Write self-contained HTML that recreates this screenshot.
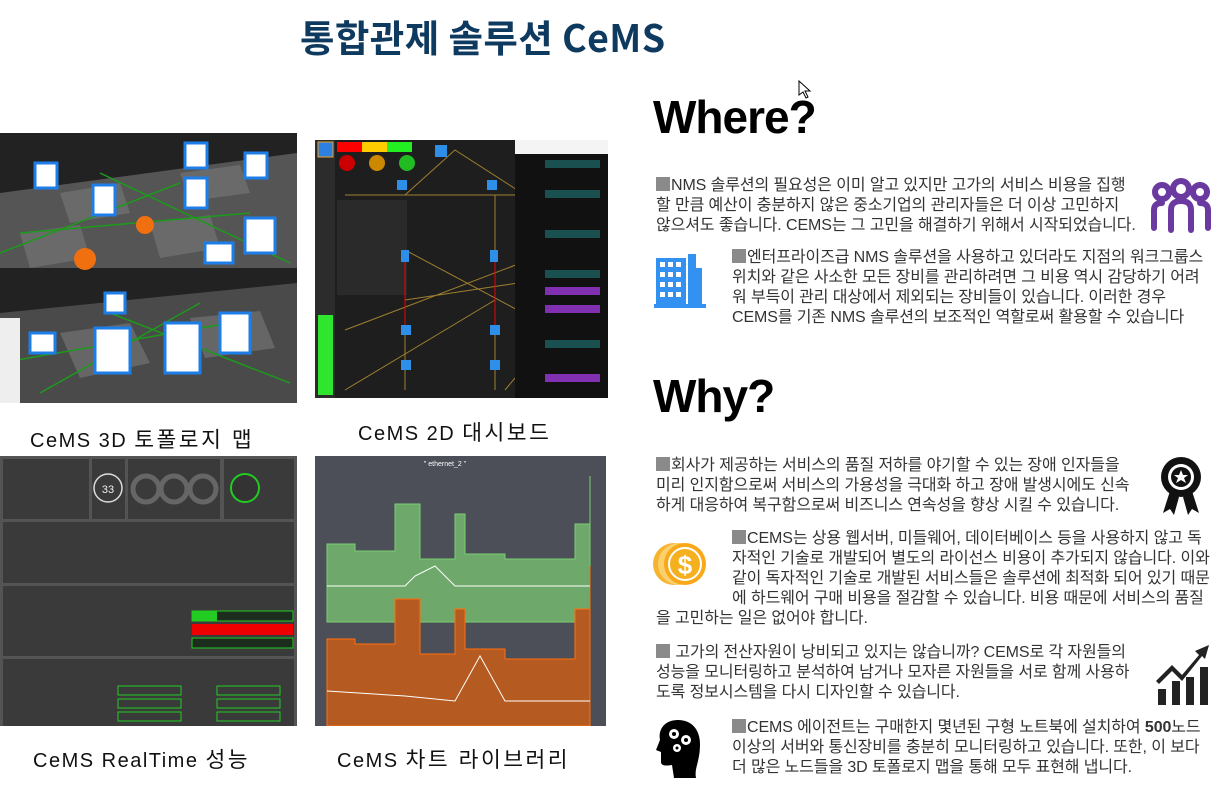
<!DOCTYPE html>
<html><head><meta charset="utf-8"><style>
*{margin:0;padding:0;box-sizing:border-box}
body{width:1228px;height:792px;background:#fff;position:relative;overflow:hidden;font-family:"Liberation Sans","Noto Sans CJK KR",sans-serif}
.a{position:absolute}
.title{left:300px;top:8px;font-size:37.5px;font-weight:bold;color:#0f3a5f;font-family:"Noto Sans CJK KR",sans-serif;letter-spacing:0.4px;white-space:nowrap}
.big{font-size:46px;font-weight:bold;color:#000;letter-spacing:-1px}
.cap{font-size:20px;color:#111;white-space:nowrap;letter-spacing:1.5px;font-family:"Liberation Sans","Noto Sans CJK KR",sans-serif}
.cap .k{font-size:21.5px;letter-spacing:2.5px}
.p{font-size:16px;line-height:20px;color:#333;white-space:nowrap;letter-spacing:-0.1px}
.sq{display:inline-block;width:14px;height:14px;background:#8a8a8a;vertical-align:-1px;margin-right:1px}
</style></head><body>
<div class="a title">통합관제 솔루션 CeMS</div>

<!-- 3D topology -->
<svg class="a" style="left:0;top:133px" width="297" height="270" viewBox="0 0 297 270">
<rect width="297" height="270" fill="#3a3a3a"/>
<polygon points="0,40 297,0 297,135 0,135" fill="#555"/>
<polygon points="0,0 297,0 297,20 0,60" fill="#222"/>
<g fill="#6a6a6a"><polygon points="60,60 120,50 130,80 70,90"/><polygon points="180,40 240,32 250,60 190,68"/><polygon points="20,100 80,92 90,125 30,135"/><polygon points="150,90 210,82 220,115 160,125"/></g>
<rect x="0" y="135" width="297" height="135" fill="#4a4a4a"/>
<polygon points="0,135 297,135 297,150 0,180" fill="#222"/>
<g fill="#666"><polygon points="60,200 130,190 150,230 80,245"/><polygon points="190,185 260,178 275,215 205,225"/></g>
<g stroke="#1c9a1c" stroke-width="1.5">
<line x1="0" y1="120" x2="180" y2="50"/><line x1="100" y1="40" x2="290" y2="130"/><line x1="20" y1="100" x2="250" y2="80"/>
<line x1="40" y1="260" x2="200" y2="170"/><line x1="110" y1="180" x2="290" y2="250"/><line x1="0" y1="230" x2="230" y2="190"/>
</g>
<g fill="#fff" stroke="#1e7ee8" stroke-width="3">
<rect x="35" y="30" width="22" height="25"/><rect x="93" y="52" width="22" height="30"/><rect x="185" y="45" width="22" height="30"/><rect x="245" y="20" width="22" height="25"/><rect x="245" y="85" width="30" height="35"/><rect x="185" y="10" width="22" height="25"/><rect x="205" y="110" width="28" height="20"/>
<rect x="95" y="195" width="35" height="45"/><rect x="165" y="190" width="35" height="50"/><rect x="220" y="180" width="30" height="40"/><rect x="30" y="200" width="25" height="20"/><rect x="105" y="160" width="20" height="20"/>
</g>
<circle cx="145" cy="92" r="9" fill="#f07010"/><circle cx="85" cy="126" r="11" fill="#f07010"/>
<rect x="0" y="185" width="20" height="85" fill="#eee"/>
</svg>
<!-- 2D dashboard -->
<svg class="a" style="left:315px;top:140px" width="293" height="258" viewBox="0 0 293 258">
<rect width="293" height="258" fill="#1e1e1e"/>
<rect x="0" y="0" width="20" height="258" fill="#2c2c2c"/>
<rect x="3" y="2" width="15" height="15" fill="#2d7fe0" stroke="#f0a020"/>
<rect x="3" y="175" width="15" height="80" fill="#2ee62e"/>
<rect x="22" y="2" width="25" height="10" fill="#f00"/><rect x="47" y="2" width="25" height="10" fill="#fc0"/><rect x="72" y="2" width="25" height="10" fill="#2e2"/>
<circle cx="32" cy="23" r="8" fill="#c00"/><circle cx="62" cy="23" r="8" fill="#c80"/><circle cx="92" cy="23" r="8" fill="#2b2"/>
<rect x="22" y="60" width="70" height="95" fill="#2a2a2a"/>
<g stroke="#a08030" stroke-width="1" fill="none"><path d="M30 55 L240 55 M90 55 L140 10 L210 55 L240 190 M90 110 L240 190 L190 250 M30 190 L240 110 M90 160 L290 130 M30 250 L180 160 M90 160 L90 250 M180 55 L180 250"/></g>
<line x1="90" y1="120" x2="90" y2="190" stroke="#e00"/><line x1="180" y1="120" x2="180" y2="190" stroke="#e00"/>
<rect x="200" y="0" width="93" height="14" fill="#f4f4f4"/>
<rect x="200" y="14" width="93" height="244" fill="#111"/>
<g fill="#1a5050"><rect x="230" y="20" width="55" height="8"/><rect x="230" y="50" width="55" height="8"/><rect x="230" y="90" width="55" height="8"/><rect x="230" y="130" width="55" height="8"/><rect x="230" y="200" width="55" height="8"/></g>
<g fill="#8030b0"><rect x="230" y="147" width="55" height="8"/><rect x="230" y="165" width="55" height="8"/><rect x="230" y="234" width="55" height="8"/></g>
<g fill="#2d8fe8"><rect x="82" y="40" width="10" height="10"/><rect x="172" y="40" width="10" height="10"/><rect x="120" y="5" width="12" height="12"/><rect x="86" y="110" width="8" height="12"/><rect x="175" y="110" width="8" height="12"/><rect x="86" y="185" width="10" height="10"/><rect x="175" y="185" width="10" height="10"/><rect x="86" y="220" width="10" height="10"/><rect x="175" y="220" width="10" height="10"/></g>
</svg>
<!-- RealTime -->
<svg class="a" style="left:0;top:456px" width="297" height="270" viewBox="0 0 297 270">
<rect width="297" height="270" fill="#545454"/>
<g fill="#3a3a3a"><rect x="3" y="3" width="86" height="60"/><rect x="92" y="3" width="33" height="60"/><rect x="128" y="3" width="92" height="60"/><rect x="224" y="3" width="70" height="60"/><rect x="3" y="66" width="291" height="61"/><rect x="3" y="130" width="291" height="70"/><rect x="3" y="203" width="291" height="67"/></g>
<g fill="none" stroke="#ddd" stroke-width="1.5"><circle cx="108" cy="32" r="14"/></g>
<text x="108" y="37" fill="#eee" font-size="11" text-anchor="middle">33</text>
<g fill="none" stroke="#666" stroke-width="5"><circle cx="146" cy="33" r="13"/><circle cx="174" cy="33" r="13"/><circle cx="203" cy="33" r="13"/></g>
<circle cx="245" cy="32" r="14" fill="#333" stroke="#2c2" stroke-width="2"/>
<rect x="192" y="155" width="101" height="10" fill="#1d2d1d" stroke="#2c2"/><rect x="192" y="155" width="25" height="10" fill="#2c2"/>
<rect x="192" y="168" width="101" height="11" fill="#e00"/>
<rect x="192" y="182" width="101" height="10" fill="#1d2d1d" stroke="#2c2"/>
<g fill="none" stroke="#2c2"><rect x="118" y="230" width="63" height="9"/><rect x="217" y="230" width="63" height="9"/><rect x="118" y="243" width="63" height="9"/><rect x="217" y="243" width="63" height="9"/><rect x="118" y="256" width="63" height="9"/><rect x="217" y="256" width="63" height="9"/></g>
</svg>
<!-- Chart -->
<svg class="a" style="left:315px;top:456px" width="291" height="270" viewBox="0 0 291 270">
<rect width="291" height="270" fill="#4c4f58"/>
<text x="130" y="10" fill="#fff" font-size="7" text-anchor="middle">" ethernet_2 "</text>
<path d="M12 118 L12 70 L40 70 L40 77 L80 77 L80 30 L105 30 L105 85 L140 85 L140 40 L150 40 L150 80 L190 80 L190 85 L260 85 L260 50 L275 50 L275 2 L275 148 L12 148 Z" transform="translate(0,18)" fill="#6ea86a" stroke="#7ad070"/>
<path d="M12 250 L12 210 L40 210 L40 215 L80 215 L80 170 L105 170 L105 225 L140 225 L140 180 L150 180 L150 220 L190 220 L190 230 L260 230 L260 180 L275 180 L275 137 L275 297 L12 297 Z" transform="translate(0,-27)" fill="#b55a20" stroke="#ff7010"/>
<path d="M12 130 L90 130 L100 120 L120 110 L140 130 L275 130" stroke="#fff" fill="none"/>
<path d="M12 235 L90 240 L140 245 L165 200 L190 245 L275 245" stroke="#fff" fill="none"/>
</svg>

<div class="a cap" style="left:30px;top:423px">CeMS 3D <span class="k">토폴로지 맵</span></div>
<div class="a cap" style="left:358px;top:416px">CeMS 2D <span class="k">대시보드</span></div>
<div class="a cap" style="left:33px;top:743px">CeMS RealTime <span class="k">성능</span></div>
<div class="a cap" style="left:337px;top:743px">CeMS <span class="k">차트 라이브러리</span></div>

<div class="a big" style="left:653px;top:90px">Where?</div>
<div class="a big" style="left:653px;top:369px">Why?</div>

<div class="a p" style="left:656px;top:176px"><span class="sq"></span>NMS 솔루션의 필요성은 이미 알고 있지만 고가의 서비스 비용을 집행<br>할 만큼 예산이 충분하지 않은 중소기업의 관리자들은 더 이상 고민하지<br>않으셔도 좋습니다. CEMS는 그 고민을 해결하기 위해서 시작되었습니다.</div>
<div class="a p" style="left:732px;top:248px"><span class="sq"></span>엔터프라이즈급 NMS 솔루션을 사용하고 있더라도 지점의 워크그룹스<br>위치와 같은 사소한 모든 장비를 관리하려면 그 비용 역시 감당하기 어려<br>워 부득이 관리 대상에서 제외되는 장비들이 있습니다. 이러한 경우<br>CEMS를 기존 NMS 솔루션의 보조적인 역할로써 활용할 수 있습니다</div>
<div class="a p" style="left:656px;top:456px"><span class="sq"></span>회사가 제공하는 서비스의 품질 저하를 야기할 수 있는 장애 인자들을<br>미리 인지함으로써 서비스의 가용성을 극대화 하고 장애 발생시에도 신속<br>하게 대응하여 복구함으로써 비즈니스 연속성을 향상 시킬 수 있습니다.</div>
<div class="a p" style="left:732px;top:529px"><span class="sq"></span>CEMS는 상용 웹서버, 미들웨어, 데이터베이스 등을 사용하지 않고 독<br>자적인 기술로 개발되어 별도의 라이선스 비용이 추가되지 않습니다. 이와<br>같이 독자적인 기술로 개발된 서비스들은 솔루션에 최적화 되어 있기 때문<br>에 하드웨어 구매 비용을 절감할 수 있습니다. 비용 때문에 서비스의 품질</div>
<div class="a p" style="left:656px;top:609px">을 고민하는 일은 없어야 합니다.</div>
<div class="a p" style="left:656px;top:643px"><span class="sq"></span> 고가의 전산자원이 낭비되고 있지는 않습니까? CEMS로 각 자원들의<br>성능을 모니터링하고 분석하여 남거나 모자른 자원들을 서로 함께 사용하<br>도록 정보시스템을 다시 디자인할 수 있습니다.</div>
<div class="a p" style="left:732px;top:718px"><span class="sq"></span>CEMS 에이전트는 구매한지 몇년된 구형 노트북에 설치하여 <b>500</b>노드<br>이상의 서버와 통신장비를 충분히 모니터링하고 있습니다. 또한, 이 보다<br>더 많은 노드들을 3D 토폴로지 맵을 통해 모두 표현해 냅니다.</div>

<!-- icons -->
<svg class="a" style="left:1150px;top:178px" width="62" height="56" viewBox="0 0 62 56" fill="none" stroke="#6a3aa0" stroke-width="6" stroke-linecap="round">
<circle cx="12" cy="14" r="7"/><circle cx="31" cy="11" r="8"/><circle cx="50" cy="14" r="7"/>
<path d="M4 50 V32 Q4 25 12 25"/><path d="M21 52 V32 Q21 23 31 23 Q41 23 41 32 V52"/><path d="M58 50 V32 Q58 25 50 25"/>
</svg>
<svg class="a" style="left:654px;top:250px" width="52" height="58" viewBox="0 0 52 58">
<rect x="2" y="8" width="30" height="48" fill="#3391f2"/><rect x="34" y="4" width="8" height="52" fill="#3391f2"/><rect x="42" y="18" width="6" height="38" fill="#3391f2"/><rect x="0" y="54" width="52" height="4" fill="#3391f2"/>
<g fill="#fff"><rect x="6" y="12" width="5" height="5"/><rect x="14" y="12" width="5" height="5"/><rect x="22" y="12" width="5" height="5"/><rect x="6" y="22" width="5" height="5"/><rect x="14" y="22" width="5" height="5"/><rect x="22" y="22" width="5" height="5"/><rect x="6" y="32" width="5" height="5"/><rect x="14" y="32" width="5" height="5"/><rect x="22" y="32" width="5" height="5"/><rect x="6" y="42" width="5" height="5"/><rect x="14" y="42" width="5" height="5"/><rect x="22" y="42" width="5" height="5"/></g>
</svg>
<svg class="a" style="left:1160px;top:455px" width="42" height="62" viewBox="0 0 42 62">
<path d="M10 36 L3 58 L10 54 L14 60 L19 42 Z M32 36 L39 58 L32 54 L28 60 L23 42 Z" fill="#111"/>
<circle cx="21" cy="22" r="20" fill="#111"/><circle cx="21" cy="22" r="13" fill="#fff"/><circle cx="21" cy="22" r="10" fill="#111"/>
<path d="M21 15 L23 20 L28 20 L24 23 L26 28 L21 25 L16 28 L18 23 L14 20 L19 20 Z" fill="#fff"/>
</svg>
<svg class="a" style="left:652px;top:537px" width="56" height="56" viewBox="0 0 56 56">
<circle cx="22" cy="27" r="21" fill="#f5b330"/><circle cx="27" cy="27" r="21" fill="#fbd06a"/><circle cx="33" cy="27" r="21" fill="#f8a818"/><circle cx="33" cy="27" r="16" fill="#f5b020" stroke="#fff" stroke-width="2"/>
<text x="33" y="37" font-size="26" font-weight="bold" fill="#fff" text-anchor="middle" font-family="Liberation Sans">$</text>
</svg>
<svg class="a" style="left:1155px;top:643px" width="56" height="62" viewBox="0 0 56 62" fill="#222">
<rect x="3" y="46" width="8" height="16"/><rect x="17" y="38" width="8" height="24"/><rect x="31" y="34" width="8" height="28"/><rect x="45" y="24" width="8" height="38"/>
<path d="M1 38 L17 22 L27 32 L44 12 L40 8 L54 2 L50 16 L47 13 L27 38 L17 28 L4 41 Z"/>
</svg>
<svg class="a" style="left:656px;top:718px" width="46" height="62" viewBox="0 0 46 62">
<path d="M22 2 C8 2 2 12 4 22 L0 32 L5 34 L5 44 C5 48 10 48 16 47 L18 60 L40 60 C38 50 44 44 44 26 C44 12 36 2 22 2 Z" fill="#000"/>
<g fill="#fff"><circle cx="18" cy="16" r="5"/><circle cx="30" cy="22" r="5"/><circle cx="21" cy="30" r="4"/></g>
<g fill="#000"><circle cx="18" cy="16" r="2"/><circle cx="30" cy="22" r="2"/><circle cx="21" cy="30" r="1.5"/></g>
</svg>
<svg class="a" style="left:797px;top:80px" width="18" height="20" viewBox="0 0 18 20"><path d="M2 1 L2 15 L6 12 L9 18 L11 17 L8 11 L13 11 Z" fill="#fff" stroke="#000"/></svg>
</body></html>
